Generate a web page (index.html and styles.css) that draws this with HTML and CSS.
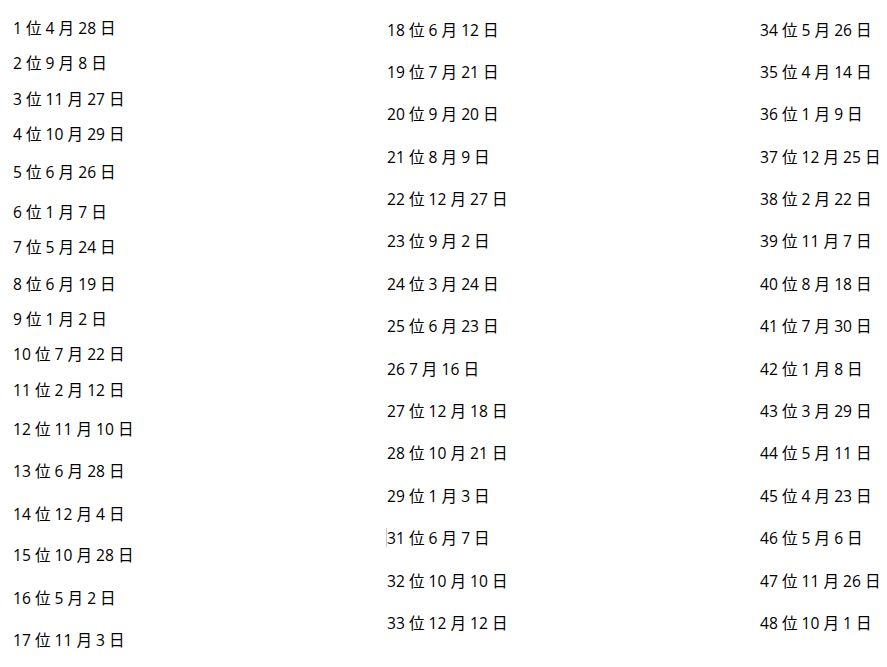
FILE: index.html
```html
<!DOCTYPE html>
<html lang="ja">
<head>
<meta charset="utf-8">
<link rel="stylesheet" href="styles.css">
</head>
<body>
<div class="page">
  <div class="col col1">
    <div class="row g35">1 位 4 月 28 日</div>
    <div class="row g36">2 位 9 月 8 日</div>
    <div class="row g35">3 位 11 月 27 日</div>
    <div class="row g38">4 位 10 月 29 日</div>
    <div class="row g40">5 位 6 月 26 日</div>
    <div class="row g35">6 位 1 月 7 日</div>
    <div class="row g37">7 位 5 月 24 日</div>
    <div class="row g35">8 位 6 月 19 日</div>
    <div class="row g35">9 位 1 月 2 日</div>
    <div class="row g36">10 位 7 月 22 日</div>
    <div class="row g39">11 位 2 月 12 日</div>
    <div class="row g42">12 位 11 月 10 日</div>
    <div class="row g43">13 位 6 月 28 日</div>
    <div class="row g41">14 位 12 月 4 日</div>
    <div class="row g43">15 位 10 月 28 日</div>
    <div class="row g42">16 位 5 月 2 日</div>
    <div class="row">17 位 11 月 3 日</div>
  </div>
  <div class="col col2">
    <div class="row">18 位 6 月 12 日</div>
    <div class="row">19 位 7 月 21 日</div>
    <div class="row">20 位 9 月 20 日</div>
    <div class="row">21 位 8 月 9 日</div>
    <div class="row">22 位 12 月 27 日</div>
    <div class="row">23 位 9 月 2 日</div>
    <div class="row">24 位 3 月 24 日</div>
    <div class="row">25 位 6 月 23 日</div>
    <div class="row">26 7 月 16 日</div>
    <div class="row">27 位 12 月 18 日</div>
    <div class="row">28 位 10 月 21 日</div>
    <div class="row">29 位 1 月 3 日</div>
    <div class="row"><span class="caret"></span>31 位 6 月 7 日</div>
    <div class="row">32 位 10 月 10 日</div>
    <div class="row">33 位 12 月 12 日</div>
  </div>
  <div class="col col3">
    <div class="row">34 位 5 月 26 日</div>
    <div class="row">35 位 4 月 14 日</div>
    <div class="row">36 位 1 月 9 日</div>
    <div class="row">37 位 12 月 25 日</div>
    <div class="row">38 位 2 月 22 日</div>
    <div class="row">39 位 11 月 7 日</div>
    <div class="row">40 位 8 月 18 日</div>
    <div class="row">41 位 7 月 30 日</div>
    <div class="row">42 位 1 月 8 日</div>
    <div class="row">43 位 3 月 29 日</div>
    <div class="row">44 位 5 月 11 日</div>
    <div class="row">45 位 4 月 23 日</div>
    <div class="row">46 位 5 月 6 日</div>
    <div class="row">47 位 11 月 26 日</div>
    <div class="row">48 位 10 月 1 日</div>
  </div>
</div>
</body>
</html>
```

FILE: styles.css
```css
html, body {
  margin: 0;
  padding: 0;
  background: #ffffff;
}
body {
  font-family: "Open Sans", "Noto Sans CJK JP", sans-serif;
  font-size: 15.6px;
  color: #000000;
  overflow: hidden;
}
.page {
  display: grid;
  grid-template-columns: 374px 373px auto;
  padding-left: 13px;
  height: 667px;
  overflow: hidden;
}
.col {
  display: flex;
  flex-direction: column;
}
.col1 {
  padding-top: 17.5px;
}
.col2, .col3 {
  padding-top: 19.5px;
  gap: 22.4px;
}
.row {
  line-height: 20px;
  height: 20px;
  white-space: nowrap;
  position: relative;
}
.g35 { margin-bottom: 15px; }
.g36 { margin-bottom: 16px; }
.g37 { margin-bottom: 17px; }
.g38 { margin-bottom: 18px; }
.g39 { margin-bottom: 19px; }
.g40 { margin-bottom: 20px; }
.g41 { margin-bottom: 21px; }
.g42 { margin-bottom: 22px; }
.g43 { margin-bottom: 23px; }
.caret {
  position: absolute;
  left: -1px;
  top: 0;
  width: 1px;
  height: 19px;
  background: #c8c8c8;
}
```
